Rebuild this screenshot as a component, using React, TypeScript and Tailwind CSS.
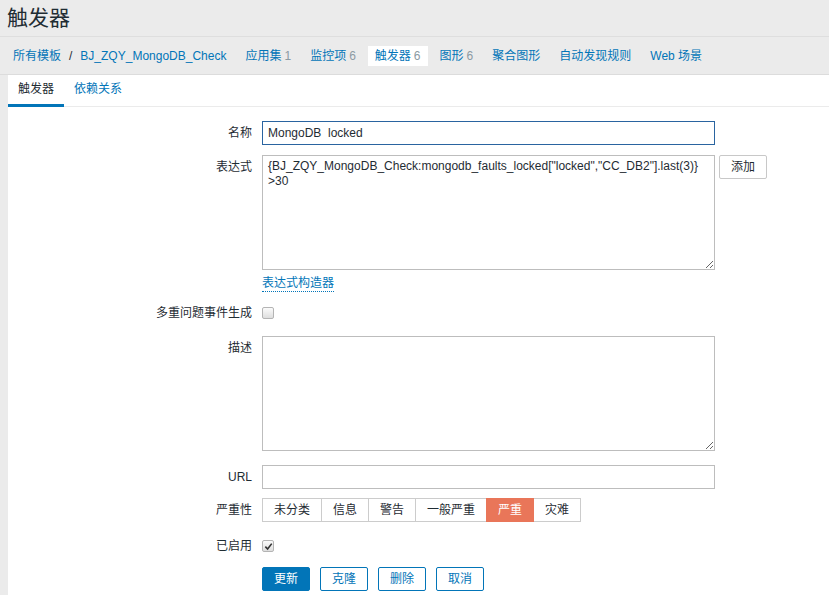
import type { ReactNode } from "react";
import clsx from "clsx";

const navItems = [
  { label: "应用集", count: "1" },
  { label: "监控项", count: "6" },
  { label: "触发器", count: "6", active: true },
  { label: "图形", count: "6" },
  { label: "聚合图形" },
  { label: "自动发现规则" },
  { label: "Web 场景" },
];

const severities = ["未分类", "信息", "警告", "一般严重", "严重", "灾难"];

function Row({
  label,
  children,
  className,
}: {
  label?: string;
  children: ReactNode;
  className?: string;
}) {
  return (
    <div className={clsx("flex items-start gap-[10px]", className)}>
      <div className="w-[244px] shrink-0 text-right leading-[24px]">{label}</div>
      <div className="flex items-start">{children}</div>
    </div>
  );
}

function Checkbox({ checked }: { checked?: boolean }) {
  return (
    <span className="flex h-[12px] w-[12px] items-center justify-center rounded-[2px] border border-[#b4b4b4] bg-gradient-to-b from-[#fbfbfb] to-[#dedede]">
      {checked && (
        <svg viewBox="0 0 10 10" className="h-[9px] w-[9px]">
          <path d="M1.5 5.2 L4 7.8 L8.6 1.8" fill="none" stroke="#333" strokeWidth="1.8" />
        </svg>
      )}
    </span>
  );
}

export default function App() {
  return (
    <div className="min-h-screen bg-[#ebebeb] font-['Liberation_Sans','Noto_Sans_CJK_SC',sans-serif] text-[12px] text-[#1f2c33]">
      {/* page title */}
      <div className="h-[37px] border-b border-[#dedede] pl-[7px] text-[21px] leading-[36px]">
        触发器
      </div>

      {/* host/template navigation */}
      <div className="flex h-[38px] items-center gap-[5px] border-b border-[#dcdcdc] pl-[6px]">
        <div className="flex h-[20px] items-center px-[7px] text-[#0275b8]">
          <span>所有模板</span>
          <span className="mx-[8px] text-[#1f2c33]">/</span>
          <span>BJ_ZQY_MongoDB_Check</span>
        </div>
        {navItems.map((item) => (
          <div
            key={item.label}
            className={clsx(
              "flex h-[20px] items-center px-[7px] text-[#0275b8]",
              item.active && "bg-white"
            )}
          >
            <span>{item.label}</span>
            {item.count && <span className="ml-[3px] text-[#8b9aa3]">{item.count}</span>}
          </div>
        ))}
      </div>

      {/* content panel */}
      <div className="ml-[8px] min-h-[520px] bg-white">
        <div className="flex border-b border-[#ebebeb]">
          <div className="-mb-px h-[32px] border-b-[3px] border-[#0275b8] px-[10px] leading-[29px]">
            触发器
          </div>
          <div className="h-[31px] px-[10px] leading-[29px] text-[#0275b8]">依赖关系</div>
        </div>

        <div className="pt-[14px]">
          <Row label="名称">
            <input
              readOnly
              value="MongoDB  locked"
              className="h-[24px] w-[453px] border border-[#2a64a0] px-[5px] outline-none"
            />
          </Row>

          <Row label="表达式" className="mt-[10px]">
            <textarea
              readOnly
              wrap="off"
              value={'{BJ_ZQY_MongoDB_Check:mongodb_faults_locked["locked","CC_DB2"].last(3)}\n>30'}
              className="h-[115px] w-[453px] overflow-hidden border border-[#bdbdbd] px-[5px] py-[3px] leading-[15px] outline-none"
            />
            <button className="ml-[4px] h-[24px] w-[48px] rounded-[2px] border border-[#c8c8c8] bg-white">
              添加
            </button>
          </Row>

          <Row className="mt-[5px]">
            <span className="border-b border-dotted border-[#0275b8] leading-[16px] text-[#0275b8]">
              表达式构造器
            </span>
          </Row>

          <Row label="多重问题事件生成" className="mt-[9px]">
            <div className="flex h-[24px] items-center">
              <Checkbox />
            </div>
          </Row>

          <Row label="描述" className="mt-[11px]">
            <textarea readOnly className="h-[115px] w-[453px] border border-[#bdbdbd] px-[5px] outline-none" />
          </Row>

          <Row label="URL" className="mt-[14px]">
            <input readOnly className="h-[24px] w-[453px] border border-[#bdbdbd] px-[5px] outline-none" />
          </Row>

          <Row label="严重性" className="mt-[9px]">
            <div className="flex h-[24px]">
              {severities.map((s, i) => (
                <div
                  key={s}
                  className={clsx(
                    "flex items-center border px-[11px]",
                    i > 0 && "-ml-px",
                    s === "严重"
                      ? "relative border-[#e97659] bg-[#e97659] text-white"
                      : "border-[#cccccc] bg-white"
                  )}
                >
                  {s}
                </div>
              ))}
            </div>
          </Row>

          <Row label="已启用" className="mt-[12px]">
            <div className="flex h-[24px] items-center">
              <Checkbox checked />
            </div>
          </Row>

          <Row className="mt-[9px]">
            <div className="flex gap-[10px]">
              <button className="h-[24px] w-[48px] rounded-[2px] border border-[#0275b8] bg-[#0275b8] text-white">
                更新
              </button>
              {["克隆", "删除", "取消"].map((b) => (
                <button
                  key={b}
                  className="h-[24px] w-[48px] rounded-[2px] border border-[#0275b8] bg-white text-[#0275b8]"
                >
                  {b}
                </button>
              ))}
            </div>
          </Row>
        </div>
      </div>
    </div>
  );
}
